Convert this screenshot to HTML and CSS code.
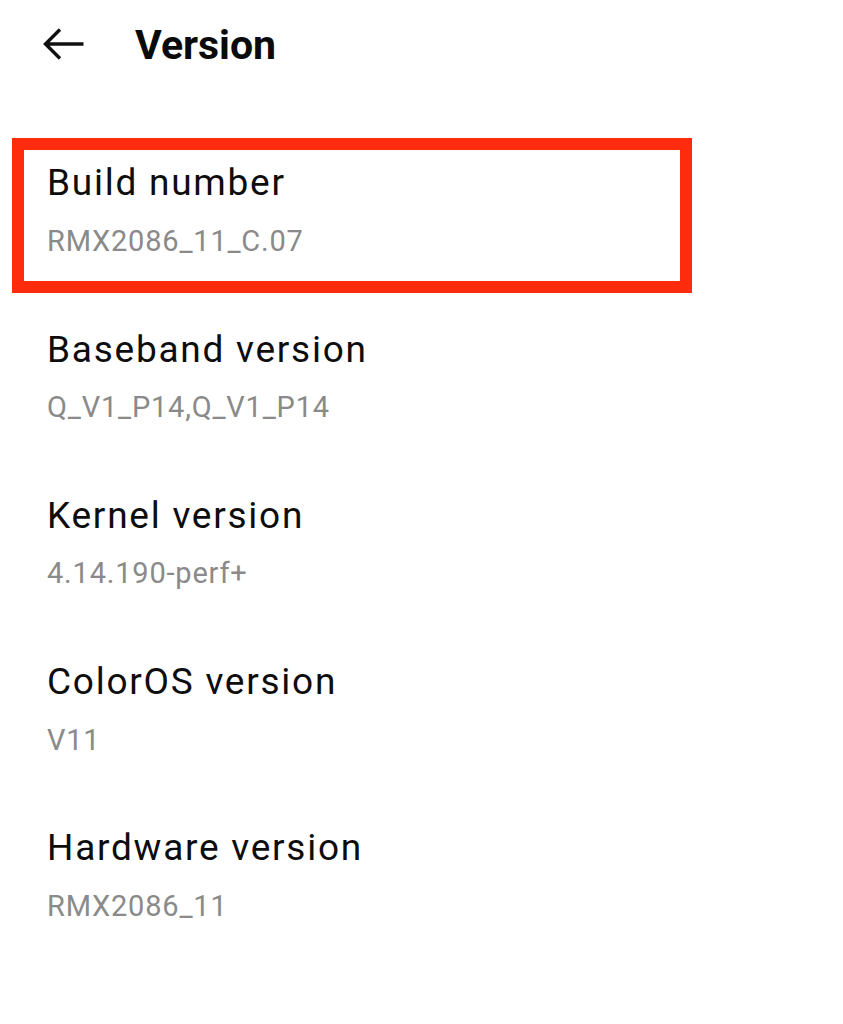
FILE: index.html
```html
<!DOCTYPE html>
<html>
<head>
<meta charset="utf-8">
<link rel="stylesheet" href="styles.css">
</head>
<body>
<header class="header">
  <svg class="back" width="42" height="34" viewBox="0 0 42 34">
    <path d="M40.5 17H3 M17 2.5L2.5 17L17 31.5" fill="none" stroke="#111" stroke-width="3.4" stroke-linecap="butt" stroke-linejoin="miter"/>
  </svg>
  <h1 class="title">Version</h1>
</header>
<ul class="list">
  <li class="row highlighted">
    <div class="row-title">Build number</div>
    <div class="row-sub">RMX2086_11_C.07</div>
  </li>
  <li class="row">
    <div class="row-title">Baseband version</div>
    <div class="row-sub">Q_V1_P14,Q_V1_P14</div>
  </li>
  <li class="row">
    <div class="row-title">Kernel version</div>
    <div class="row-sub">4.14.190-perf+</div>
  </li>
  <li class="row">
    <div class="row-title">ColorOS version</div>
    <div class="row-sub">V11</div>
  </li>
  <li class="row">
    <div class="row-title">Hardware version</div>
    <div class="row-sub">RMX2086_11</div>
  </li>
</ul>
</body>
</html>
```
FILE: styles.css
```css
*, *::before, *::after { box-sizing: border-box; }
html, body {
  margin: 0;
  padding: 0;
  background: #ffffff;
  font-family: Roboto, "Noto Sans", sans-serif;
}
.header {
  height: 128.35px;
  padding-top: 21px;
  display: flex;
  align-items: flex-start;
}
.back {
  margin-left: 43px;
  margin-top: 6px;
  flex: none;
}
.title {
  margin: 0 0 0 50px;
  font-size: 41px;
  line-height: 48px;
  font-weight: 700;
  color: #0a0a0a;
}
.list {
  list-style: none;
  margin: 0;
  padding: 0;
}
.row {
  position: relative;
  height: 166.25px;
  padding: 33px 0 0 47px;
  display: flex;
  flex-direction: column;
  gap: 15.5px;
}
.row-title {
  font-size: 37px;
  line-height: 44px;
  letter-spacing: 1.75px;
  color: #0d0d0d;
}
.row-sub {
  font-size: 29px;
  line-height: 40px;
  letter-spacing: 0.8px;
  color: #8a8a8a;
}
.highlighted::before {
  content: "";
  position: absolute;
  left: 12px;
  top: 9.65px;
  width: 680px;
  height: 155px;
  border: 12px solid #fe2b0c;
  pointer-events: none;
}
```
